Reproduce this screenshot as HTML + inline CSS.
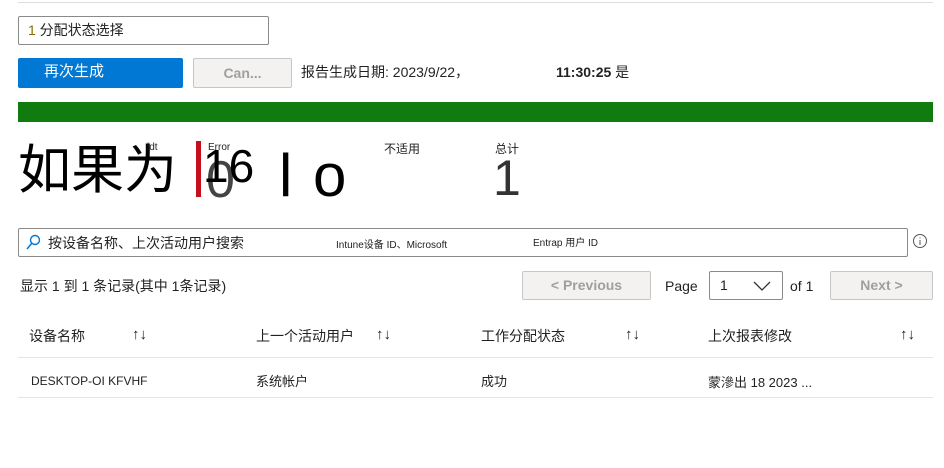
<!DOCTYPE html>
<html><head><meta charset="utf-8"><style>
body{margin:0;width:944px;height:468px;background:#fff;font-family:"Liberation Sans","Noto Sans CJK SC",sans-serif;color:#222;position:relative;overflow:hidden}
.a{position:absolute;white-space:nowrap}
</style></head><body>
<div class="a" style="left:18px;top:2px;width:915px;height:1px;background:#ddd"></div>
<div class="a" style="left:18px;top:16px;height:27px;border:1px solid #8a8a8a;border-radius:2px;font-size:14px;line-height:27px;padding-left:9px;width:240px"><span style="color:#8a6a00">1</span> 分配状态选择</div>
<div class="a" style="left:18px;top:58px;width:165px;height:30px;background:#0078d4;border-radius:2px;color:#fff;font-size:15px;line-height:28px;padding-left:26px;box-sizing:border-box">再次生成</div>
<div class="a" style="left:193px;top:58px;width:99px;height:30px;background:#f3f2f1;border:1px solid #c8c6c4;border-radius:2px;box-sizing:border-box;color:#a19f9d;font-size:14px;font-weight:bold;line-height:28px;text-align:center">Can...</div>
<div class="a" style="left:301px;top:62px;font-size:14px">报告生成日期: 2023/9/22，</div>
<div class="a" style="left:556px;top:62px;font-size:14px"><b>11:30:25</b> 是</div>
<div class="a" style="left:18px;top:102px;width:915px;height:20px;background:#107c10"></div>
<div class="a" style="left:18px;top:134px;font-size:53px;line-height:64px;font-family:'Noto Sans CJK SC',sans-serif;color:#000">如果为</div>
<div class="a" style="left:147px;top:142px;font-size:10px">idt</div>
<div class="a" style="left:196px;top:141px;width:5px;height:56px;background:#c50f1f"></div>
<div class="a" style="left:208px;top:142px;font-size:10px">Error</div>
<div class="a" style="left:206px;top:152px;font-size:52px;line-height:56px;color:#444">0</div>
<div class="a" style="left:203px;top:138px;font-size:46px;line-height:56px;color:#000">16</div>
<div class="a" style="left:279px;top:146px;font-size:60px;line-height:60px;color:#000">l</div>
<div class="a" style="left:313px;top:146px;font-size:60px;line-height:60px;color:#000">o</div>
<div class="a" style="left:384px;top:140px;font-size:12px">不适用</div>
<div class="a" style="left:495px;top:140px;font-size:12px">总计</div>
<div class="a" style="left:493px;top:150px;font-size:50px;line-height:56px;color:#333">1</div>
<div class="a" style="left:18px;top:228px;width:890px;height:29px;border:1px solid #8a8a8a;border-radius:2px;box-sizing:border-box"></div>
<svg class="a" style="left:25px;top:234px" width="16" height="16"><circle cx="10" cy="6" r="4.5" fill="none" stroke="#0078d4" stroke-width="1.4"/><path d="M7 9 L2 15" stroke="#0078d4" stroke-width="1.5"/></svg>
<div class="a" style="left:48px;top:233px;font-size:14px">按设备名称、上次活动用户搜索</div>
<div class="a" style="left:336px;top:236px;font-size:10px">Intune设备 ID、Microsoft</div>
<div class="a" style="left:533px;top:234px;font-size:10px">Entrap 用户 ID</div>
<svg class="a" style="left:912px;top:233px" width="16" height="16"><circle cx="8" cy="8" r="6.5" fill="none" stroke="#555"/><path d="M8 7v5M8 4.5v1" stroke="#555"/></svg>
<div class="a" style="left:20px;top:276px;font-size:14px">显示 1 到 1 条记录(其中 1条记录)</div>
<div class="a" style="left:522px;top:271px;width:129px;height:29px;background:#f3f2f1;border:1px solid #c8c6c4;border-radius:2px;box-sizing:border-box;color:#a19f9d;font-size:14px;font-weight:bold;line-height:27px;text-align:center">&lt; Previous</div>
<div class="a" style="left:665px;top:278px;font-size:14px">Page</div>
<div class="a" style="left:709px;top:271px;width:74px;height:29px;border:1px solid #8a8a8a;border-radius:2px;box-sizing:border-box;font-size:14px;line-height:27px;padding-left:10px">1</div>
<svg class="a" style="left:752px;top:280px" width="20" height="12"><path d="M2 2l8 8 8-8" fill="none" stroke="#333" stroke-width="1.3"/></svg>
<div class="a" style="left:790px;top:278px;font-size:14px">of 1</div>
<div class="a" style="left:830px;top:271px;width:103px;height:29px;background:#f3f2f1;border:1px solid #c8c6c4;border-radius:2px;box-sizing:border-box;color:#a19f9d;font-size:14px;font-weight:bold;line-height:27px;text-align:center">Next &gt;</div>
<div class="a" style="left:29px;top:326px;font-size:14px">设备名称</div>
<div class="a" style="left:132px;top:326px;font-size:15px">↑↓</div>
<div class="a" style="left:256px;top:326px;font-size:14px">上一个活动用户</div>
<div class="a" style="left:376px;top:326px;font-size:15px">↑↓</div>
<div class="a" style="left:481px;top:326px;font-size:14px">工作分配状态</div>
<div class="a" style="left:625px;top:326px;font-size:15px">↑↓</div>
<div class="a" style="left:708px;top:326px;font-size:14px">上次报表修改</div>
<div class="a" style="left:900px;top:326px;font-size:15px">↑↓</div>
<div class="a" style="left:18px;top:357px;width:915px;height:1px;background:#e5e5e5"></div>
<div class="a" style="left:31px;top:374px;font-size:12px">DESKTOP-OI KFVHF</div>
<div class="a" style="left:256px;top:371px;font-size:13px">系统帐户</div>
<div class="a" style="left:481px;top:371px;font-size:13px">成功</div>
<div class="a" style="left:708px;top:372px;font-size:13px">蒙滲出 18 2023 ...</div>
<div class="a" style="left:18px;top:397px;width:915px;height:1px;background:#e5e5e5"></div>
</body></html>
